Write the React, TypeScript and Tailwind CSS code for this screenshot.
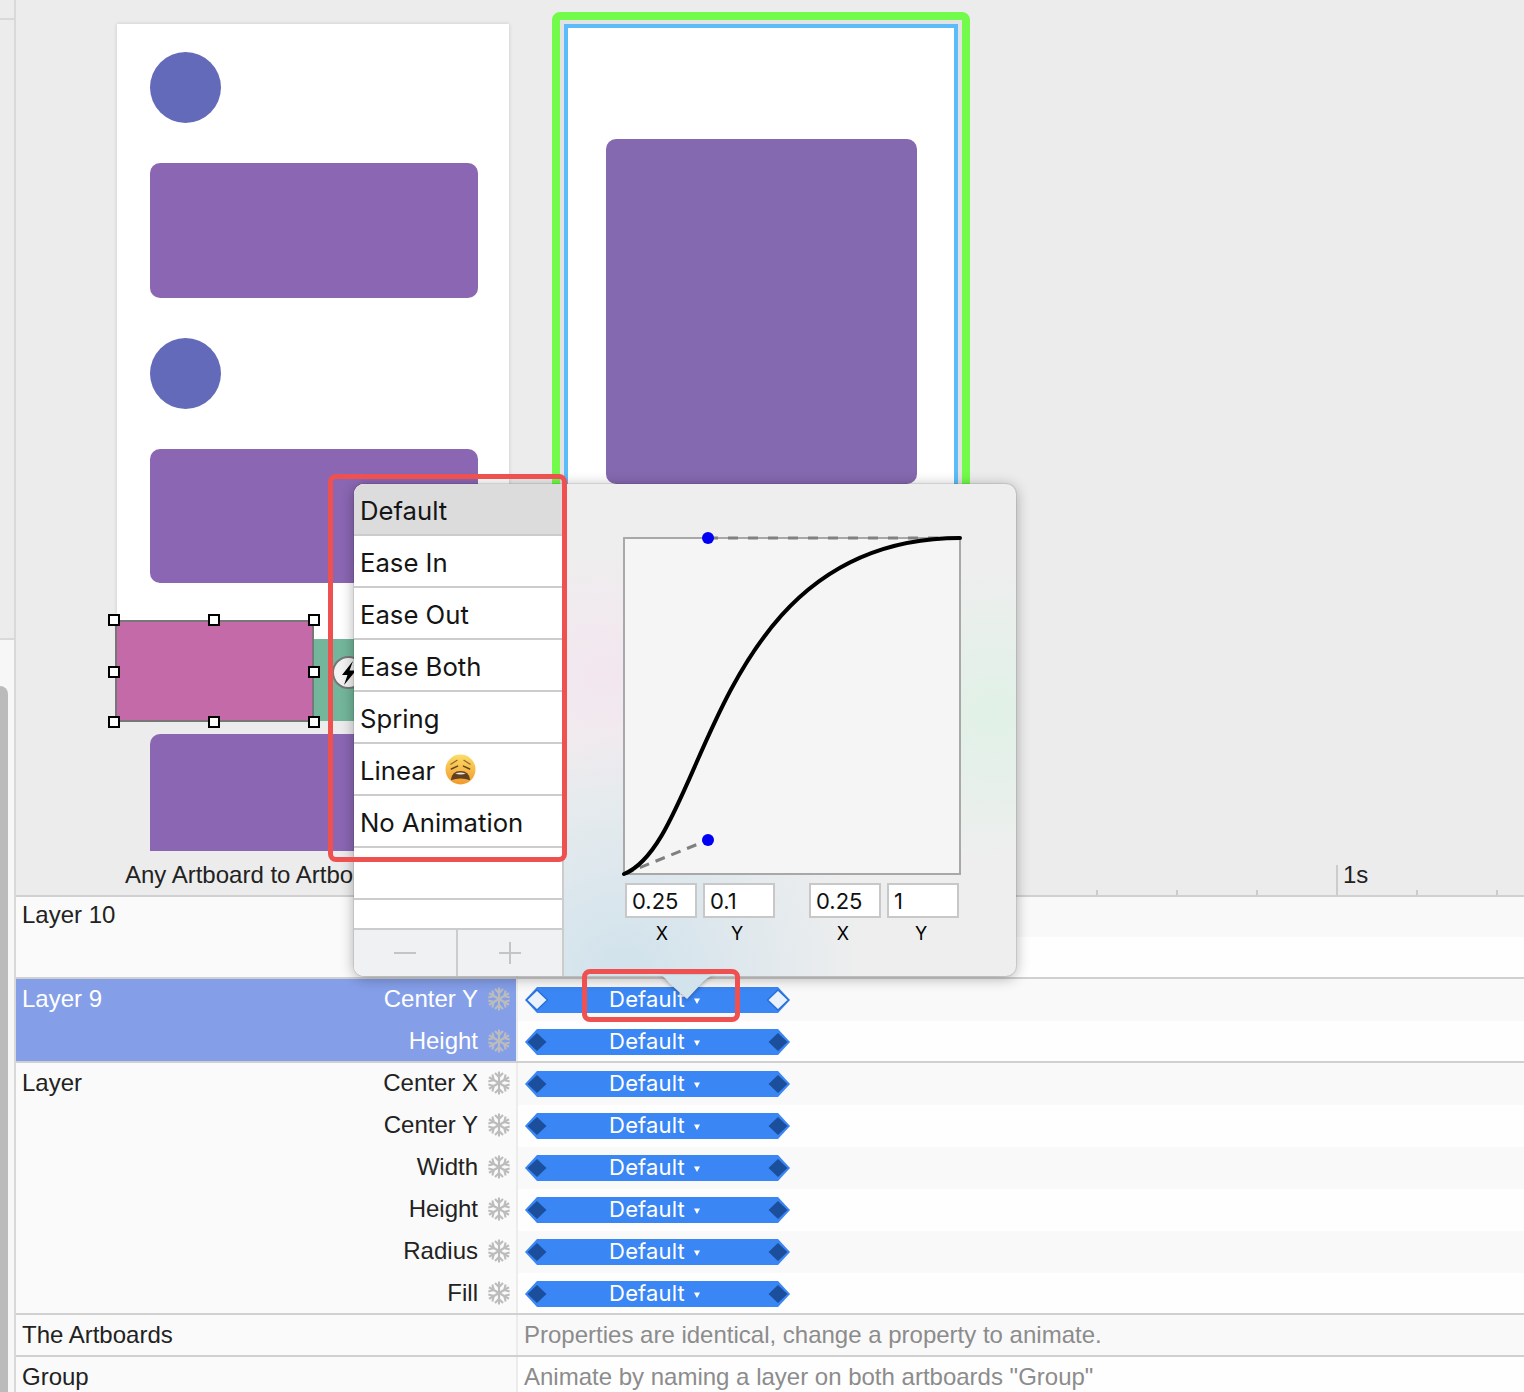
import React from 'react';

const rows = [
  { name: 'Layer 10', first: true },
  { first: false },
  { name: 'Layer 9', prop: 'Center Y', first: true, selected: true, open: true },
  { prop: 'Height', first: false, selected: true },
  { name: 'Layer', prop: 'Center X', first: true },
  { prop: 'Center Y', first: false },
  { prop: 'Width', first: false },
  { prop: 'Height', first: false },
  { prop: 'Radius', first: false },
  { prop: 'Fill', first: false },
  { name: 'The Artboards', note: 'Properties are identical, change a property to animate.', first: true },
  { name: 'Group', note: 'Animate by naming a layer on both artboards "Group"', first: true },
];

const menuItems = ['Default', 'Ease In', 'Ease Out', 'Ease Both', 'Spring', 'Linear', 'No Animation', '', ''];

const handles = [
  'left-[-9px] top-[-8px]',
  'left-[91px] top-[-8px]',
  'left-[191px] top-[-8px]',
  'left-[-9px] top-[44px]',
  'left-[191px] top-[44px]',
  'left-[-9px] top-[94px]',
  'left-[91px] top-[94px]',
  'left-[191px] top-[94px]',
];

const Snowflake = () => (
  <svg width="24" height="24" viewBox="-12 -12 24 24" className="shrink-0">
    {[0, 60, 120, 180, 240, 300].map((a) => (
      <g key={a} transform={`rotate(${a})`} stroke="#bcbcbc" strokeWidth="2.1" fill="none">
        <path d="M0 0V-11.5" />
        <path d="M-4 -10L0 -6L4 -10" />
      </g>
    ))}
  </svg>
);

const Diamond = ({ open, side }: { open?: boolean; side: 'left' | 'right' }) => (
  <svg
    width="24"
    height="24"
    viewBox="0 0 24 24"
    className={`absolute top-px ${side === 'left' ? 'left-0' : 'right-0'}`}
  >
    <path
      d="M12 2L22.5 12L12 22L1.5 12Z"
      fill={open ? '#e9f1fb' : '#1b4f9b'}
      stroke={open ? '#2a6fd6' : '#3a86f5'}
      strokeWidth="1.5"
    />
  </svg>
);

const Bar = ({ open }: { open?: boolean }) => (
  <div className="relative h-[26px] w-[265px]">
    <div className="flex h-full items-center justify-center bg-[#3a86f5] pb-[2px] pr-[6px] text-[22px] tracking-[0.15px] text-white [clip-path:polygon(0_50%,12px_0,calc(100%-12px)_0,100%_50%,calc(100%-12px)_100%,12px_100%)] [font-family:Inter,sans-serif]">
      <span>Default</span>
      <svg width="6" height="6" viewBox="0 0 6 6" className="ml-[9px] mt-[4px]">
        <path d="M0 0.5H6L3 6Z" fill="#fff" />
      </svg>
    </div>
    <Diamond open={open} side="left" />
    <Diamond open={open} side="right" />
  </div>
);

const WearyFace = () => (
  <svg width="31" height="31" viewBox="0 0 32 32" className="-mt-[4px] ml-[10px]">
    <defs>
      <linearGradient id="face" x1="0" y1="0" x2="0" y2="1">
        <stop offset="0" stopColor="#fcdc68" />
        <stop offset="1" stopColor="#f19a2a" />
      </linearGradient>
    </defs>
    <circle cx="16" cy="16" r="15.5" fill="url(#face)" />
    <path d="M6 10.5L12.5 6.5M26 10.5L19.5 6.5" stroke="#8f6a30" strokeWidth="1.3" fill="none" strokeLinecap="round" />
    <path d="M6.5 15.5L13 12.5M25.5 15.5L19 12.5" stroke="#5f4420" strokeWidth="1.5" fill="none" strokeLinecap="round" />
    <path d="M6 27Q7 17.5 16 17.5Q25 17.5 26 27Q16 23.5 6 27Z" fill="#5f4022" />
    <path d="M10.5 20.5Q16 17.5 21.5 20.5Q16 22 10.5 20.5Z" fill="#efe6dc" />
  </svg>
);

const BezierGraph = () => (
  <svg width="340" height="340" viewBox="-2 -2 340 340" className="overflow-visible">
    <rect x="0" y="0" width="336" height="336" fill="#f5f5f5" stroke="#a8a8a8" strokeWidth="2" />
    <path d="M84 0H336" stroke="#808080" strokeWidth="3" strokeDasharray="10 10" fill="none" />
    <path d="M0 336L84 302" stroke="#808080" strokeWidth="3" strokeDasharray="10 7" fill="none" />
    <path d="M0 336C84 302 84 0 336 0" stroke="#000" strokeWidth="4" strokeLinecap="round" fill="none" />
    <circle cx="84" cy="0" r="6" fill="#0000f5" />
    <circle cx="84" cy="302" r="6" fill="#0000f5" />
  </svg>
);

const Field = ({ value }: { value: string }) => (
  <div className="flex h-[35px] w-[72px] items-center border-2 border-[#c8c8c8] bg-white pl-[5px] pt-[2px] text-[22px] text-[#111] [font-family:Inter,sans-serif]">
    {value}
  </div>
);

const AxisLabel = ({ text }: { text: string }) => (
  <div className="w-[72px] text-center text-[18px] leading-[22px] text-black [font-family:Inter,sans-serif]">{text}</div>
);

const Popover = () => (
  <div className="absolute left-[354px] top-[484px] z-10 flex h-[492px] w-[662px] overflow-hidden rounded-[10px] bg-[#eeeeee] shadow-[0_0_0_1px_rgba(0,0,0,0.08),0_2px_14px_rgba(0,0,0,0.32)] [background-image:radial-gradient(circle_at_270px_490px,#d0e2ec_0,transparent_240px),radial-gradient(circle_at_640px_230px,#e0f1e7_0,transparent_150px),radial-gradient(circle_at_250px_190px,#f3e6ef_0,transparent_130px)]">
    <div className="flex w-[210px] shrink-0 flex-col border-r-2 border-[#cccccc] bg-white">
      {menuItems.map((item, i) => (
        <div
          key={i}
          className={`flex shrink-0 items-center border-b-2 border-[#cccccc] pl-[6px] pt-[4px] text-[25.7px] text-[#151515] [font-family:Inter,sans-serif] ${
            i === 8 ? 'h-[30px]' : 'h-[52px]'
          } ${i === 0 ? 'bg-[#dcdcdc]' : ''}`}
        >
          {item}
          {item === 'Linear' && <WearyFace />}
        </div>
      ))}
      <div className="flex flex-1 bg-[#f0f1f3]">
        <div className="flex w-[104px] items-center justify-center border-r-2 border-[#cccccc]">
          <div className="h-[2px] w-[22px] bg-[#c4c4c4]" />
        </div>
        <div className="relative flex flex-1 items-center justify-center">
          <div className="h-[2px] w-[22px] bg-[#c4c4c4]" />
          <div className="absolute h-[22px] w-[2px] bg-[#c4c4c4]" />
        </div>
      </div>
    </div>
    <div className="flex flex-1 flex-col pl-[58px] pt-[52px]">
      <BezierGraph />
      <div className="ml-[3px] mt-[7px] flex">
        <div className="flex gap-[6px]">
          <Field value="0.25" />
          <Field value="0.1" />
        </div>
        <div className="ml-[34px] flex gap-[6px]">
          <Field value="0.25" />
          <Field value="1" />
        </div>
      </div>
      <div className="ml-[4px] mt-[5px] flex">
        <div className="flex gap-[3px]">
          <AxisLabel text="X" />
          <AxisLabel text="Y" />
        </div>
        <div className="ml-[34px] flex gap-[6px]">
          <AxisLabel text="X" />
          <AxisLabel text="Y" />
        </div>
      </div>
    </div>
  </div>
);

const Canvas = () => (
  <div className="relative h-[895px] shrink-0 overflow-hidden bg-[#ececec] [font-family:'Liberation_Sans',sans-serif]">
    {/* left artboard */}
    <div className="absolute left-[101px] top-[24px] flex h-[615px] w-[392px] flex-col gap-[40px] bg-white pl-[33px] pt-[28px] shadow-[0_0_4px_rgba(0,0,0,0.15)]">
      <div className="h-[71px] w-[71px] rounded-full bg-[#636ab9]" />
      <div className="h-[135px] w-[328px] rounded-[10px] bg-[#8b67b3]" />
      <div className="h-[71px] w-[71px] rounded-full bg-[#636ab9]" />
      <div className="h-[134px] w-[328px] rounded-[10px] bg-[#8b67b3]" />
    </div>
    <div className="absolute left-[134px] top-[734px] h-[117px] w-[328px] rounded-t-[10px] bg-[#8b67b3]" />

    {/* transition between layers */}
    <div className="absolute left-[298px] top-[639px] h-[82px] w-[60px] bg-[#73b69b] pl-[18px] pt-[17px]">
      <div className="flex h-[33px] w-[33px] items-center justify-center rounded-full border-2 border-[#777777] bg-[#f2f2f2]">
        <svg width="16" height="24" viewBox="0 0 16 24">
          <path d="M12 0L1 14H6.5L3 24L15 9.5H8.5Z" fill="#000" />
        </svg>
      </div>
    </div>
    <div className="absolute left-[99px] top-[620px] h-[102px] w-[199px] border-2 border-[#777777] bg-[#c56aa9]">
      {handles.map((h) => (
        <div key={h} className={`absolute h-[12px] w-[12px] border-2 border-black bg-white ${h}`} />
      ))}
    </div>

    {/* right artboard */}
    <div className="absolute left-[536px] top-[12px] h-[500px] w-[418px] rounded-[8px] border-[8px] border-[#72fb4b] bg-[#e2e2e2] p-[4px]">
      <div className="h-full border-4 border-[#5bbcf9] bg-white pl-[38px] pt-[111px]">
        <div className="h-[345px] w-[311px] rounded-[10px] bg-[#8569b0]" />
      </div>
    </div>

    <div className="absolute left-[109px] top-[861px] whitespace-nowrap text-[24px] leading-[28px] text-[#222222]">
      Any Artboard to Artboard
    </div>

    {/* ruler */}
    <div className="absolute left-[1080px] top-[890px] h-[5px] w-[2px] bg-[#cccccc]" />
    <div className="absolute left-[1160px] top-[890px] h-[5px] w-[2px] bg-[#cccccc]" />
    <div className="absolute left-[1240px] top-[890px] h-[5px] w-[2px] bg-[#cccccc]" />
    <div className="absolute left-[1320px] top-[865px] h-[30px] w-[2px] bg-[#cccccc]" />
    <div className="absolute left-[1400px] top-[890px] h-[5px] w-[2px] bg-[#cccccc]" />
    <div className="absolute left-[1480px] top-[890px] h-[5px] w-[2px] bg-[#cccccc]" />
    <div className="absolute left-[1327px] top-[861px] text-[24px] leading-[28px] text-[#222222]">1s</div>
  </div>
);

const Timeline = () => (
  <div className="flex flex-col [font-family:'Liberation_Sans',sans-serif]">
    {rows.map((row, i) => (
      <div key={i} className="relative flex h-[42px] shrink-0">
        {row.first && (
          <div className={`absolute inset-x-0 h-[2px] bg-[#d0d0d0] ${i === 0 ? 'top-0' : 'top-[-2px]'}`} />
        )}
        <div
          className={`flex w-[500px] shrink-0 items-center justify-between pb-[2px] pl-[6px] pr-[5px] text-[24px] ${
            row.selected ? 'bg-[#849ee8] text-white' : 'bg-[#fafafa] text-[#222222]'
          }`}
        >
          <span>{row.name}</span>
          {row.prop && (
            <span className="flex items-center gap-[9px]">
              {row.prop}
              <Snowflake />
            </span>
          )}
        </div>
        <div
          className={`flex flex-1 items-center border-l-2 border-[#ececec] pl-[7px] ${
            i % 2 === 0 ? 'bg-[#f9f9f9]' : 'bg-[#fefefe]'
          }`}
        >
          {row.prop && <Bar open={row.open} />}
          {row.note && <span className="-ml-px mb-[2px] text-[24px] text-[#8c8c8c]">{row.note}</span>}
        </div>
      </div>
    ))}
  </div>
);

export default function App() {
  return (
    <div className="relative flex h-[1392px] w-[1524px] overflow-hidden bg-[#f7f7f7]">
      <div className="flex w-[16px] shrink-0 flex-col">
        <div className="h-[640px] shrink-0 border-b-2 border-r-2 border-[#d9d9d9] bg-[#ececec]">
          <div className="mt-[18px] h-[2px] w-full bg-[#d9d9d9]" />
        </div>
        <div className="flex-1 border-r-2 border-[#d9d9d9] pt-[46px]">
          <div className="h-full w-[8px] rounded-tr-[8px] bg-[#bbbbbb]" />
        </div>
      </div>
      <div className="flex min-w-0 flex-1 flex-col">
        <Canvas />
        <Timeline />
      </div>

      <Popover />
      <svg
        width="60"
        height="26"
        viewBox="0 0 60 26"
        className="absolute left-[657px] top-[975px] z-10 drop-shadow-[0_1px_2px_rgba(0,0,0,0.35)]"
      >
        <path d="M2 0C7 1 9 4 12 8L30 24L45 8C49 4 52 1 58 0Z" fill="#d3e3ec" />
      </svg>

      <div className="absolute left-[328px] top-[474px] z-20 h-[388px] w-[239px] rounded-[8px] border-[5px] border-[#ef5050]" />
      <div className="absolute left-[582px] top-[969px] z-20 h-[53px] w-[158px] rounded-[8px] border-[5px] border-[#ef5050]" />
    </div>
  );
}
